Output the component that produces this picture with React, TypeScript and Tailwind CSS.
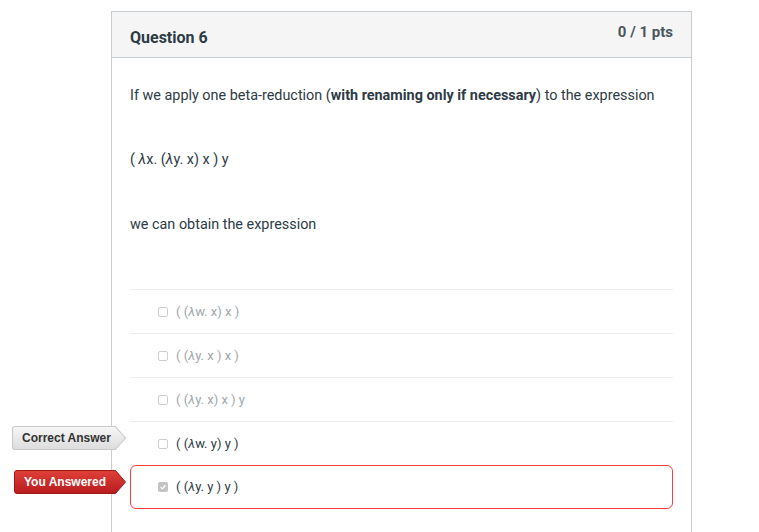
import React from "react";

type Option = {
  parts: React.ReactNode;
  muted: boolean;
  checked?: boolean;
  picked?: boolean;
};

const L = () => <span className="italic">λ</span>;

const OPTIONS: Option[] = [
  { parts: <>( (<L />w. x) x )</>, muted: true },
  { parts: <>( (<L />y. x ) x )</>, muted: true },
  { parts: <>( (<L />y. x) x ) y</>, muted: true },
  { parts: <>( (<L />w. y) y )</>, muted: false },
  { parts: <>( (<L />y. y ) y )</>, muted: false, checked: true, picked: true },
];

const ArrowLabel = ({
  text,
  tone,
  className,
}: {
  text: string;
  tone: "light" | "red";
  className: string;
}) => {
  const light = tone === "light";
  return (
    <div className={`absolute h-[24px] ${className}`}>
      <svg className="absolute inset-0 h-full w-full" viewBox="0 0 112 24" preserveAspectRatio="none">
        <defs>
          <linearGradient id={`g-${tone}`} x1="0" y1="0" x2="0" y2="1">
            <stop offset="0" stopColor={light ? "#f7f7f7" : "#e0403a"} />
            <stop offset="1" stopColor={light ? "#dcdcdc" : "#b71c1c"} />
          </linearGradient>
        </defs>
        <path
          d="M3 0.5 H101.5 L111.5 12 L101.5 23.5 H3 Q0.5 23.5 0.5 21 V3 Q0.5 0.5 3 0.5 Z"
          fill={`url(#g-${tone})`}
          stroke={light ? "#c8c8c8" : "#a51616"}
          strokeWidth="1"
        />
      </svg>
      <span
        className={`relative flex h-full items-center pl-[10px] text-[12px] font-bold font-['Liberation_Sans',Arial,sans-serif] ${
          light ? "text-[#333]" : "text-white"
        }`}
      >
        {text}
      </span>
    </div>
  );
};

const Checkbox = ({ checked }: { checked?: boolean }) =>
  checked ? (
    <span className="flex h-[10px] w-[10px] items-center justify-center rounded-[2px] bg-[#c4c4c4]">
      <svg viewBox="0 0 10 10" className="h-[8px] w-[8px]">
        <path d="M2 5.2 L4.2 7.3 L8 2.8" fill="none" stroke="#fff" strokeWidth="1.6" />
      </svg>
    </span>
  ) : (
    <span className="h-[10px] w-[10px] rounded-[2px] border border-[#cfcfcf] bg-white" />
  );

export default function App() {
  return (
    <div className="relative min-h-[532px] bg-white pt-[11px] font-['Roboto',sans-serif] text-[#2d3b45]">
      <div className="ml-[111px] w-[581px] border border-[#c7cdd1] border-b-0 min-h-[521px]">
        <div className="flex h-[46px] items-start justify-between border-b border-[#c7cdd1] bg-[#f5f5f5] px-[18px]">
          <span className="mt-[16px] text-[16px] font-bold leading-[20px]">Question 6</span>
          <span className="mt-[10px] text-[15px] font-bold leading-[20px] text-[#4a555e]">0 / 1 pts</span>
        </div>
        <div className="px-[18px] pt-[28px] text-[14.4px] leading-[20px]">
          <p>
            If we apply one beta-reduction (<b>with renaming only if necessary</b>) to the expression
          </p>
          <p className="mt-[44px]">
            ( <L />x. (<L />y. x) x ) y
          </p>
          <p className="mt-[45px]">we can obtain the expression</p>
          <div className="mt-[54px]">
            {OPTIONS.map((o, i) => (
              <div
                key={i}
                className={
                  o.picked
                    ? "flex h-[44px] items-center gap-[8px] rounded-[6px] border border-[#ff3b3b] pl-[27px]"
                    : "flex h-[44px] items-center gap-[8px] border-t border-[#ececec] pl-[28px]"
                }
              >
                <Checkbox checked={o.checked} />
                <span className={`text-[13px] ${o.muted ? "text-[#a0a6ab]" : "text-[#2d3b45]"}`}>{o.parts}</span>
              </div>
            ))}
          </div>
        </div>
      </div>
      <ArrowLabel text="Correct Answer" tone="light" className="left-[12px] top-[426px] w-[114px]" />
      <ArrowLabel text="You Answered" tone="red" className="left-[14px] top-[470px] w-[112px]" />
    </div>
  );
}
